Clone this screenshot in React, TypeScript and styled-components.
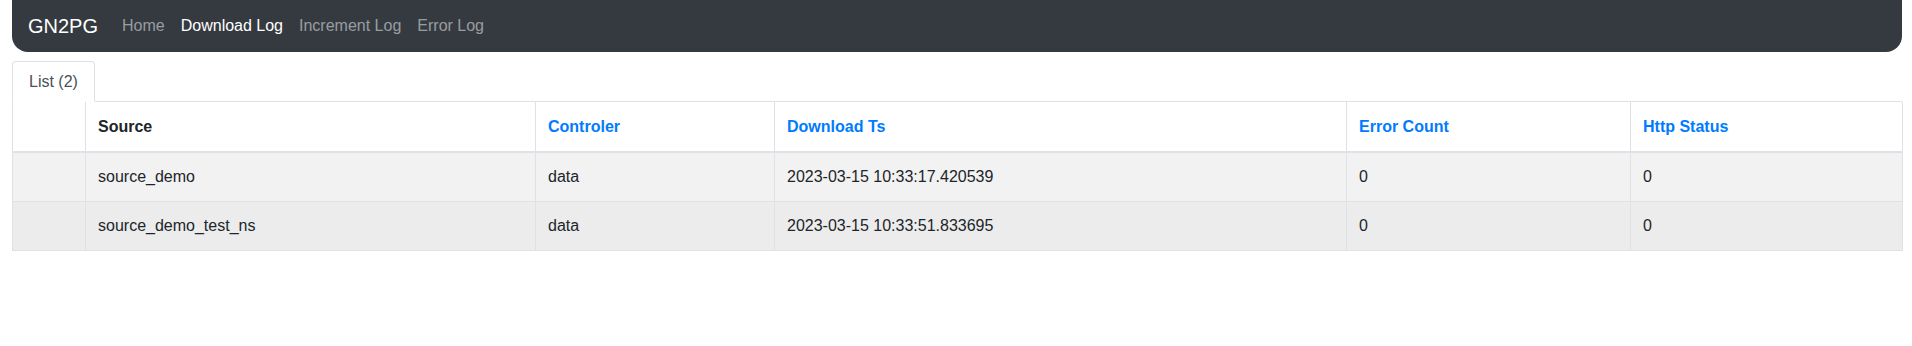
import styled, { createGlobalStyle } from 'styled-components';

const GlobalStyle = createGlobalStyle`
  body {
    margin: 0;
    background: #fff;
    font-family: 'Liberation Sans', Arial, sans-serif;
    font-size: 16px;
    line-height: 1.5;
    color: #212529;
  }
`;

const Page = styled.div`
  padding: 0 10px 0 12px;
`;

const Navbar = styled.nav`
  display: flex;
  align-items: center;
  height: 52px;
  padding: 0 16px;
  background: #343a40;
  border-radius: 0 0 16px 16px;
`;

const Brand = styled.span`
  font-size: 20px;
  line-height: 30px;
  color: #fff;
  margin-right: 16px;
`;

const NavLink = styled.a<{ $active?: boolean }>`
  padding: 0 8px;
  color: ${(p) => (p.$active ? '#fff' : 'rgba(255, 255, 255, 0.5)')};
  text-decoration: none;
  cursor: pointer;
`;

const TabBar = styled.div`
  display: flex;
  margin-top: 9px;
  border-bottom: 1px solid #dee2e6;
`;

const Tab = styled.div`
  padding: 8px 16px 7px;
  margin-bottom: -1px;
  color: #495057;
  background: #fff;
  border: 1px solid #dee2e6;
  border-bottom-color: #fff;
  border-radius: 4px 4px 0 0;
`;

const Table = styled.table`
  width: 100%;
  table-layout: fixed;
  border-collapse: collapse;
  border: 1px solid #dee2e6;
  border-top: none;
`;

const HeadCell = styled.th<{ $sortable?: boolean }>`
  padding: 13px 12px 12px;
  text-align: left;
  font-weight: 700;
  color: ${(p) => (p.$sortable ? '#007bff' : '#212529')};
  border: 1px solid #dee2e6;
  border-top: none;
  border-bottom: 2px solid #dee2e6;
`;

const Row = styled.tr<{ $shade: string }>`
  background: ${(p) => p.$shade};
`;

const Cell = styled.td`
  padding: 12px;
  border: 1px solid #dee2e6;
`;

const columns = [
  { label: '', width: 73 },
  { label: 'Source', width: 450 },
  { label: 'Controler', width: 239, sortable: true },
  { label: 'Download Ts', width: 572, sortable: true },
  { label: 'Error Count', width: 284, sortable: true },
  { label: 'Http Status', width: 272, sortable: true },
];

const rows = [
  { source: 'source_demo', controler: 'data', ts: '2023-03-15 10:33:17.420539', errors: 0, status: 0 },
  { source: 'source_demo_test_ns', controler: 'data', ts: '2023-03-15 10:33:51.833695', errors: 0, status: 0 },
];

export default function App() {
  return (
    <Page>
      <GlobalStyle />
      <Navbar>
        <Brand>GN2PG</Brand>
        <NavLink>Home</NavLink>
        <NavLink $active>Download Log</NavLink>
        <NavLink>Increment Log</NavLink>
        <NavLink>Error Log</NavLink>
      </Navbar>

      <TabBar>
        <Tab>List ({rows.length})</Tab>
      </TabBar>

      <Table>
        <colgroup>
          {columns.map((c, i) => (
            <col key={i} style={{ width: c.width }} />
          ))}
        </colgroup>
        <thead>
          <tr>
            {columns.map((c, i) => (
              <HeadCell key={i} $sortable={c.sortable}>
                {c.label}
              </HeadCell>
            ))}
          </tr>
        </thead>
        <tbody>
          {rows.map((r, i) => (
            <Row key={r.source} $shade={i % 2 === 0 ? '#f2f2f2' : '#ececec'}>
              <Cell />
              <Cell>{r.source}</Cell>
              <Cell>{r.controler}</Cell>
              <Cell>{r.ts}</Cell>
              <Cell>{r.errors}</Cell>
              <Cell>{r.status}</Cell>
            </Row>
          ))}
        </tbody>
      </Table>
    </Page>
  );
}
